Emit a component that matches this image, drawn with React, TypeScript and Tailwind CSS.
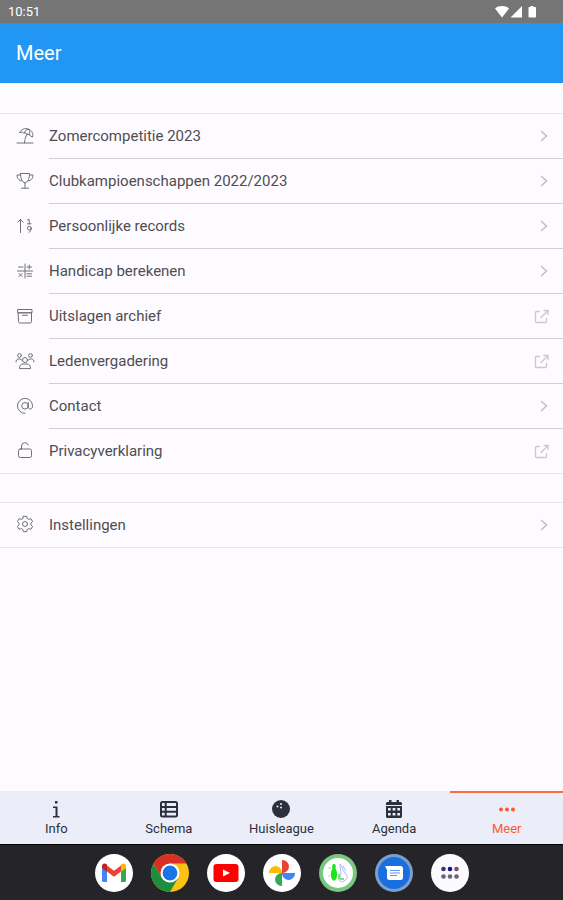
import type { ReactNode } from 'react';

type Item = { label: string; icon: ReactNode; external?: boolean };

function Line({ children }: { children: ReactNode }) {
  return (
    <svg className="w-[18px] h-[18px]" viewBox="0 0 18 18" fill="none" stroke="currentColor" strokeWidth={1} strokeLinecap="round" strokeLinejoin="round">
      {children}
    </svg>
  );
}

const items: Item[] = [
  {
    label: 'Zomercompetitie 2023',
    icon: (
      <Line>
        <path d="M1 16h16M8.500 16c.3-3.500 1-6 2.700-9.500M4 5.500C5 2 9 .8 12.500 2.200 16 3.500 17.500 6.500 16.500 10l-2.200-1-1-1.500-2 .2-1.600-2-2 .5-1.500-1.200L4 5.500zM12.500 2.200C10 2.500 9 4 8.200 6M12.500 2.200c1.500 1.800 1.600 3.500 1 5.500" />
      </Line>
    ),
  },
  {
    label: 'Clubkampioenschappen 2022/2023',
    icon: (
      <Line>
        <path d="M4.500 1.500h9c0 4.500-1.300 8.500-4.500 9.500-3.200-1-4.500-5-4.500-9.500zM4.600 3H1c0 3 1.500 5.500 5 6M13.400 3H17c0 3-1.500 5.500-5 6M9 11v5M5.500 16.200h7" />
      </Line>
    ),
  },
  {
    label: 'Persoonlijke records',
    icon: (
      <Line>
        <path d="M4.500 15.500v-13M1.800 5.200l2.700-2.700 2.700 2.700M11.500 3l1.700-.7v4.500M11.500 6.800H15" />
        <circle cx="13.300" cy="11.200" r="1.900" />
        <path d="M15.200 11.200c0 2-.8 3.300-2.200 4.300" />
      </Line>
    ),
  },
  {
    label: 'Handicap berekenen',
    icon: (
      <Line>
        <path d="M1.500 9h15M9 2v14M2.500 5H7M11 5h4.500M13.250 3v4M3 11.500l3 3M6 11.500l-3 3M11 11.800h4.500M11 14.200h4.500" />
      </Line>
    ),
  },
  {
    label: 'Uitslagen archief',
    external: true,
    icon: (
      <Line>
        <path d="M2 2.500h14v3.300H2zM2.500 5.800h13v8.900c0 .8-.5 1.300-1.300 1.300H3.800c-.8 0-1.300-.5-1.300-1.300zM6.500 8.300h5" />
      </Line>
    ),
  },
  {
    label: 'Ledenvergadering',
    external: true,
    icon: (
      <svg className="w-5 h-[18px]" viewBox="0 0 20 18" fill="none" stroke="currentColor" strokeWidth={1} strokeLinecap="round" strokeLinejoin="round">
        <circle cx="4.500" cy="3.500" r="1.900" />
        <circle cx="15.500" cy="3.500" r="1.900" />
        <circle cx="10" cy="8" r="2.500" />
        <path d="M4.500 16.200c0-3 1.500-4.200 3.500-4.200h4c2 0 3.500 1.200 3.500 4.200zM1 10c0-2 1-3 2.500-3H5l1.500 1M19 10c0-2-1-3-2.500-3H15l-1.500 1" />
      </svg>
    ),
  },
  {
    label: 'Contact',
    icon: (
      <Line>
        <circle cx="9" cy="8.800" r="3.300" />
        <path d="M12.300 5.500v4.300c0 1.500.8 2.200 2 2.200 1.500 0 2.200-1.300 2.200-3.200A7.500 7.500 0 1 0 9 16.400" />
      </Line>
    ),
  },
  {
    label: 'Privacyverklaring',
    external: true,
    icon: (
      <Line>
        <rect x="2.500" y="8" width="13" height="8.500" rx="1.800" />
        <path d="M5.500 8V5A3.500 3.500 0 0 1 12.300 4" />
      </Line>
    ),
  },
];

const settings: Item = {
  label: 'Instellingen',
  icon: (
    <Line>
      <circle cx="9" cy="9" r="2.500" />
      <path d="M7.300 1.300h3.400l.5 2.200 1.500.9 2.200-.7 1.700 2.900-1.700 1.600v1.700l1.700 1.500-1.700 2.900-2.200-.7-1.500.9-.5 2.200H7.300l-.5-2.200-1.500-.9-2.200.7-1.700-2.900 1.700-1.500V8.200L1.400 6.600l1.700-2.900 2.200.7 1.500-.9z" />
    </Line>
  ),
};

function Row({ item, last }: { item: Item; last?: boolean }) {
  return (
    <li>
      <a href="#" className={`flex text-[#4e4e52] ${last ? 'h-11' : 'h-[45px]'}`}>
        <span className="flex w-[49px] shrink-0 items-center justify-center pb-[2px] text-[#707074]">{item.icon}</span>
        <span className={`flex flex-1 items-center justify-between pr-[14px] ${last ? '' : 'border-b border-[#cfcfd3]'}`}>
          <span className="text-[15px]">{item.label}</span>
          {item.external ? (
            <svg className="w-[15px] h-[15px] text-[#c9c9cd]" viewBox="0 0 15 15" fill="none" stroke="currentColor" strokeWidth={1.300}>
              <path d="M6 2.500H2.500a1 1 0 0 0-1 1v9a1 1 0 0 0 1 1h9a1 1 0 0 0 1-1V9M9.500 1.500H14V6M13.800 1.700L6.500 9" />
            </svg>
          ) : (
            <svg className="w-[10px] h-[14px] text-[#c0c0c4]" viewBox="0 0 10 14" fill="none" stroke="currentColor" strokeWidth={1.500}>
              <path d="M2 2l5.500 5L2 12" />
            </svg>
          )}
        </span>
      </a>
    </li>
  );
}

const tabs = [
  {
    label: 'Info',
    icon: <path fill="currentColor" d="M8 1h2.500v2.500H8zM6 6.500h4.500V16h2v1.500H6V16h2.500V8H6z" />,
  },
  {
    label: 'Schema',
    icon: (
      <g fill="none" stroke="currentColor" strokeWidth={2}>
        <rect x="1" y="2" width="16" height="14.500" rx="1.500" />
        <path d="M1 7h16M1 11.700h16M5.700 2v14.500" />
      </g>
    ),
  },
  {
    label: 'Huisleague',
    icon: (
      <>
        <circle cx="9" cy="9" r="9" fill="currentColor" />
        <circle cx="5.500" cy="6.500" r="1" fill="#ebeef9" />
        <circle cx="9" cy="4" r="1" fill="#ebeef9" />
        <circle cx="9" cy="7.500" r="1" fill="#ebeef9" />
      </>
    ),
  },
  {
    label: 'Agenda',
    icon: (
      <>
        <path fill="currentColor" d="M4 0h2.500v2h5V0H14v2h1.500c.8 0 1.500.7 1.500 1.500V5H1V3.500C1 2.700 1.700 2 2.500 2H4zM1 6h16v10.500c0 .8-.7 1.500-1.500 1.500h-13c-.8 0-1.500-.7-1.500-1.500z" />
        <path fill="#ebeef9" d="M3 8h2.700v2.500H3zM7.600 8h2.800v2.500H7.600zM12.300 8H15v2.500h-2.700zM3 13h2.700v2.500H3zM7.600 13h2.800v2.500H7.600zM12.300 13H15v2.500h-2.700z" />
      </>
    ),
  },
  {
    label: 'Meer',
    active: true,
    icon: (
      <g fill="currentColor">
        <circle cx="3" cy="9.500" r="2" />
        <circle cx="9" cy="9.500" r="2" />
        <circle cx="15" cy="9.500" r="2" />
      </g>
    ),
  },
];

const apps = [
  {
    name: 'Gmail',
    icon: (
      <>
        <circle cx="19" cy="19" r="19" fill="#fff" />
        <path fill="#4285f4" d="M7 13l5 4v11H8.500A1.500 1.500 0 0 1 7 26.500z" />
        <path fill="#34a853" d="M31 13l-5 4v11h3.500a1.500 1.500 0 0 0 1.500-1.500z" />
        <path fill="#ea4335" d="M12 11.500l7 5.200 7-5.200v6l-7 5.300-7-5.300z" />
        <path fill="#c5221f" d="M7 14v-2c0-2.300 2.500-3.200 4.200-2l.8.700v7z" />
        <path fill="#fbbc04" d="M31 14v-2c0-2.300-2.500-3.200-4.200-2l-.8.700v7z" />
      </>
    ),
  },
  {
    name: 'Chrome',
    icon: (
      <>
        <circle cx="19" cy="19" r="19" fill="#fbc116" />
        <path fill="#d93025" d="M2.550 9.500A19 19 0 0 1 35.450 9.500H19L10.800 23.750z" />
        <path fill="#1e8e3e" d="M2.550 9.500A19 19 0 0 0 19 38l8.200-14.250H10.800z" />
        <circle cx="19" cy="19" r="9.500" fill="#fff" />
        <circle cx="19" cy="19" r="7.400" fill="#1a73e8" />
      </>
    ),
  },
  {
    name: 'YouTube',
    icon: (
      <>
        <circle cx="19" cy="19" r="19" fill="#fff" />
        <rect x="6.500" y="10" width="25" height="18" rx="3" fill="#f00" />
        <path d="M16 15.500l7 3.500-7 3.500z" fill="#fff" />
      </>
    ),
  },
  {
    name: 'Foto’s',
    icon: (
      <>
        <circle cx="19" cy="19" r="19" fill="#fff" />
        <path d="M19 6h.5a6.500 6.500 0 0 1 0 13H19z" fill="#ea4335" />
        <path d="M32 19v.500a6.500 6.500 0 0 1-13 0V19z" fill="#4285f4" />
        <path d="M19 32h-.5a6.500 6.500 0 0 1 0-13h.5z" fill="#34a853" />
        <path d="M6 19v-.500a6.500 6.500 0 0 1 13 0v.5z" fill="#fbbc04" />
      </>
    ),
  },
  {
    name: 'Bowling',
    icon: (
      <>
        <circle cx="19" cy="19" r="19" fill="#7bc67e" />
        <circle cx="19" cy="19" r="15" fill="#fff" />
        <path d="M15 10c2 0 2 2.500 1.500 4.500 2 3 2.500 9-.5 12h-2c-3-3-2.500-9-.5-12-.5-2-.5-4.500 1.500-4.500z" fill="#1be51b" />
        <path d="M21 10c3 2 2 6 5 9s3 6-1 8-6-1-4-4 0-8 0-13zM24 12l3 5" fill="none" stroke="#a6bbea" strokeWidth="1" />
        <path d="M20 20v5M21 25h4" stroke="#54d754" strokeWidth="1.500" />
        <path d="M9 14h3M9 22h2" stroke="#9be89b" strokeWidth="1" />
      </>
    ),
  },
  {
    name: 'Berichten',
    icon: (
      <>
        <circle cx="19" cy="19" r="19" fill="#7d9fce" />
        <circle cx="19" cy="19" r="16" fill="#1a6fe0" />
        <path d="M10 12h15.500a2.500 2.500 0 0 1 2.500 2.500v9a2.500 2.500 0 0 1-2.500 2.500h-11a2.500 2.500 0 0 1-2.500-2.500V16z" fill="#fff" />
        <path d="M15 16.500h10M15 19h10M15 21.500h7" stroke="#5b97ee" strokeWidth="1.200" />
      </>
    ),
  },
  {
    name: 'Alle apps',
    icon: (
      <>
        <circle cx="19" cy="19" r="19" fill="#fbfaff" />
        <circle cx="12.500" cy="15" r="2.300" fill="#34347d" />
        <circle cx="19" cy="15" r="2.300" fill="#17177f" />
        <circle cx="25.500" cy="15" r="2.300" fill="#854c6a" />
        <g fill="#666377">
          <circle cx="12.500" cy="22.500" r="2.300" />
          <circle cx="19" cy="22.500" r="2.300" />
          <circle cx="25.500" cy="22.500" r="2.300" />
        </g>
      </>
    ),
  },
];

export default function App() {
  return (
    <div className="flex min-h-screen flex-col bg-[#fdfbff] font-['Roboto',sans-serif]">
      <div className="flex h-[23px] items-center justify-between bg-[#757575] pl-2 pr-[26px] text-white">
        <span className="text-[13px]">10:51</span>
        <svg className="h-[14px] w-[42px]" viewBox="0 0 42 14" fill="currentColor">
          <path d="M0 3.500C4 .3 10 .3 14 3.500L7 12.500zM27 1v11.500H15.500zM34 2h1.500V1h3v1H40c.6 0 1 .4 1 1v8.500c0 .6-.4 1-1 1h-5.500c-.6 0-1-.4-1-1V3c0-.6.100-1 .5-1z" />
        </svg>
      </div>

      <header className="flex h-[60px] items-center bg-[#2196f3] px-4">
        <h1 className="text-xl text-white">Meer</h1>
      </header>

      <main className="flex-1 pt-[30px]">
        <ul className="border-y border-[#e6e5e9]">
          {items.map((item, i) => (
            <Row key={item.label} item={item} last={i === items.length - 1} />
          ))}
        </ul>
        <ul className="mt-7 border-y border-[#e6e5e9]">
          <Row item={settings} last />
        </ul>
      </main>

      <nav className="grid h-[53px] grid-cols-5 bg-[#ebeef9]">
        {tabs.map((tab) => (
          <a
            key={tab.label}
            href="#"
            className={`flex flex-col items-center border-t-2 pt-[7px] ${tab.active ? 'border-[#ff6b3d] text-[#ff5a2b]' : 'border-transparent text-[#2b303b]'}`}
          >
            <svg className="h-[18px] w-[18px]" viewBox="0 0 18 18">{tab.icon}</svg>
            <span className="mt-[3px] text-[13px] leading-4">{tab.label}</span>
          </a>
        ))}
      </nav>

      <footer className="flex h-14 items-center justify-center gap-[18px] border-t border-black bg-[#252529]">
        {apps.map((app) => (
          <button key={app.name} type="button" aria-label={app.name}>
            <svg className="h-[38px] w-[38px]" viewBox="0 0 38 38">{app.icon}</svg>
          </button>
        ))}
      </footer>
    </div>
  );
}
